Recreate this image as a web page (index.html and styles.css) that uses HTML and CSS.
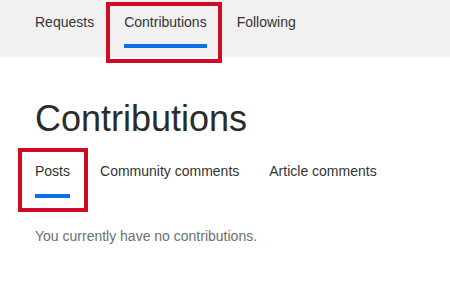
FILE: index.html
```html
<!DOCTYPE html>
<html>
<head>
<meta charset="utf-8">
<link rel="stylesheet" href="styles.css">
</head>
<body>
<div class="page">
  <nav class="topnav">
    <div class="tab"><span class="label">Requests</span></div>
    <div class="tab active"><span class="label">Contributions</span><span class="bar"></span></div>
    <div class="tab"><span class="label">Following</span></div>
  </nav>
  <main class="content">
    <h1 class="title">Contributions</h1>
    <nav class="subnav">
      <div class="tab active"><span class="label">Posts</span><span class="bar"></span></div>
      <div class="tab"><span class="label">Community comments</span></div>
      <div class="tab"><span class="label">Article comments</span></div>
    </nav>
    <p class="empty">You currently have no contributions.</p>
  </main>
  <div class="highlight hl-top"></div>
  <div class="highlight hl-sub"></div>
</div>
</body>
</html>
```
FILE: styles.css
```css
html, body {
  margin: 0;
  padding: 0;
  background: #ffffff;
}
.page {
  position: relative;
  width: 450px;
  height: 296px;
  overflow: hidden;
  font-family: "Liberation Sans", Arial, sans-serif;
  color: #333333;
}
.topnav {
  display: flex;
  gap: 30px;
  background: #f1f1f1;
  padding: 12px 0 9px 35px;
}
.tab {
  display: flex;
  flex-direction: column;
  align-items: stretch;
  font-size: 14px;
  line-height: 20px;
}
.tab .label {
  white-space: nowrap;
}
.topnav .tab {
  height: 36px;
}
.topnav .bar {
  margin-top: 12px;
  height: 4px;
  background: #0b6fe8;
}
.content {
  padding: 0 35px;
}
.title {
  margin: 40px 0 0 0;
  font-size: 36px;
  line-height: 44px;
  font-weight: normal;
  color: #2b2b2b;
}
.subnav {
  display: flex;
  gap: 30px;
  margin-top: 20px;
  height: 37px;
}
.subnav .bar {
  margin-top: 13px;
  height: 4px;
  background: #0b6fe8;
}
.empty {
  margin: 28px 0 0 0;
  font-size: 14px;
  line-height: 20px;
  color: #6b6f73;
}
.highlight {
  position: absolute;
  border: 4px solid #cf0a24;
  box-sizing: border-box;
}
.hl-top {
  left: 106px;
  top: 2px;
  width: 116px;
  height: 61px;
}
.hl-sub {
  left: 18px;
  top: 148px;
  width: 70px;
  height: 64px;
}
```
